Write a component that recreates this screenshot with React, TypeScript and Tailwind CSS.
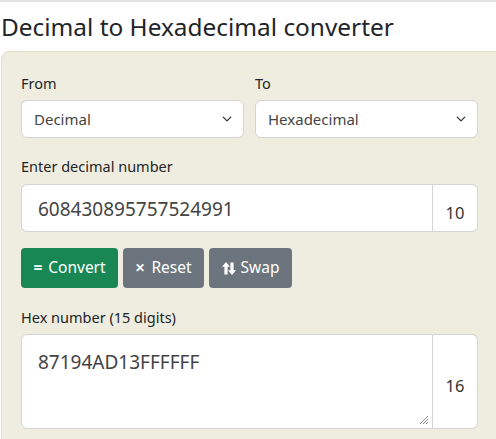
function Chevron() {
  return (
    <svg
      className="absolute right-[11px] top-1/2 -translate-y-1/2 pointer-events-none"
      width="10"
      height="10"
      viewBox="0 0 16 16"
      fill="none"
      stroke="#343a40"
      strokeWidth="2.2"
      strokeLinecap="round"
      strokeLinejoin="round"
    >
      <path d="m2 5 6 6 6-6" />
    </svg>
  );
}

function SelectBox({ label, value }: { label: string; value: string }) {
  return (
    <div className="flex flex-col w-[223px]">
      <label className="text-[14.5px] text-[#212529] leading-[22px] mb-[6px]">{label}</label>
      <div className="relative h-[38px] bg-white border border-[#d4d4d4] rounded-[6px] flex items-center pl-[12px]">
        <span className="text-[15px] text-[#444]">{value}</span>
        <Chevron />
      </div>
    </div>
  );
}

export default function App() {
  const font = { fontFamily: '"Noto Sans", "Open Sans", sans-serif' };
  return (
    <div className="w-[496px] h-[439px] overflow-hidden bg-white border-t-2 border-[#e2e2e2]" style={font}>
      <h1 className="text-[24.4px] text-[#212529] leading-[34px] mt-[8px] ml-[1px]">
        Decimal to Hexadecimal converter
      </h1>
      <div className="mt-[7px] ml-[1px] w-[520px] h-[420px] bg-[#efeddf] border border-[#e3e0cc] rounded-[8px] pl-[19px] pt-[20px]">
        <div className="flex gap-[11px]">
          <SelectBox label="From" value="Decimal" />
          <SelectBox label="To" value="Hexadecimal" />
        </div>

        <label className="block text-[14.5px] text-[#212529] leading-[22px] mt-[17px] mb-[7px]">
          Enter decimal number
        </label>
        <div className="flex w-[457px] h-[48px]">
          <div className="flex-1 bg-white border border-[#d4d4d4] rounded-l-[6px] flex items-center pl-[16px] pt-[3px]">
            <span className="text-[19px] text-[#444]">608430895757524991</span>
          </div>
          <div className="w-[45px] bg-white border border-l-0 border-[#d4d4d4] rounded-r-[6px] flex items-end justify-center pb-[5px]">
            <span className="text-[16.5px] text-[#333]">10</span>
          </div>
        </div>

        <div className="flex gap-[5px] mt-[16px]">
          <button className="h-[40px] w-[97px] bg-[#198754] text-white rounded-[4px] text-[15.5px] flex items-center justify-center gap-[6px]">
            <span className="font-bold">=</span>
            <span>Convert</span>
          </button>
          <button className="h-[40px] w-[81px] bg-[#6c757d] text-white rounded-[4px] text-[15.5px] flex items-center justify-center gap-[6px]">
            <span className="font-bold text-[12px]">✕</span>
            <span>Reset</span>
          </button>
          <button className="h-[40px] w-[83px] bg-[#6c757d] text-white rounded-[4px] text-[15.5px] flex items-center justify-center gap-[5px]">
            <svg width="14" height="15" viewBox="0 0 14 14" fill="white">
              <path d="M4 0.5 L8 5.2 H5.6 V13 H2.4 V5.2 H0 Z" />
              <path d="M10 13.5 L14 8.8 H11.6 V1 H8.4 V8.8 H6 Z" />
            </svg>
            <span>Swap</span>
          </button>
        </div>

        <label className="block text-[14.5px] text-[#212529] leading-[22px] mt-[18px] mb-[6px]">
          Hex number (15 digits)
        </label>
        <div className="flex w-[457px] h-[95px]">
          <div className="relative flex-1 bg-white border border-[#d4d4d4] rounded-l-[6px] pl-[16px] pt-[13px]">
            <span className="text-[19px] text-[#444]">87194AD13FFFFFF</span>
            <svg className="absolute right-[3px] bottom-[3px]" width="10" height="10" viewBox="0 0 10 10" stroke="#888" strokeWidth="1">
              <path d="M9 1 L1 9 M9 4 L4 9 M9 7 L7 9" />
            </svg>
          </div>
          <div className="w-[45px] bg-white border border-l-0 border-[#d4d4d4] rounded-r-[6px] flex items-center justify-center pt-[10px]">
            <span className="text-[16.5px] text-[#333]">16</span>
          </div>
        </div>
      </div>
    </div>
  );
}
